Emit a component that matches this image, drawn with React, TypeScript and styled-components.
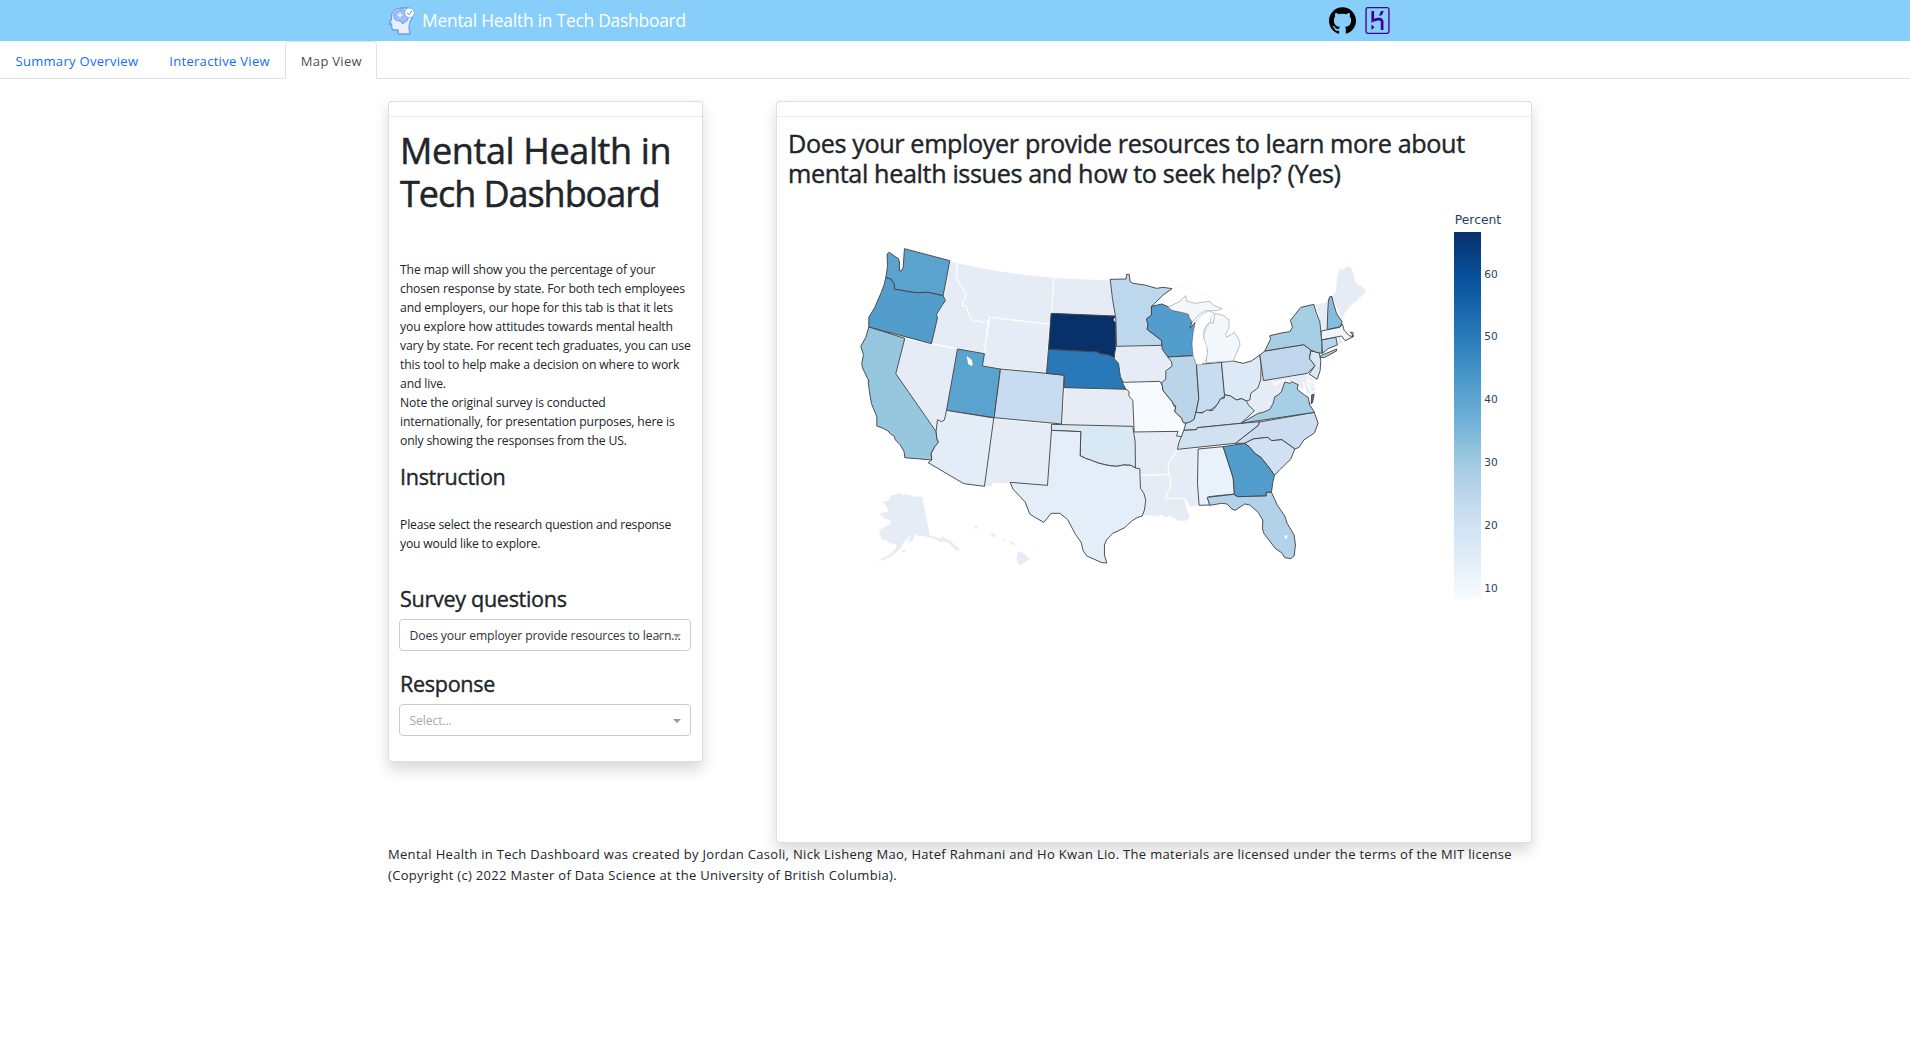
import React from 'react';
import styled, { createGlobalStyle } from 'styled-components';
import { SiGithub, SiHeroku } from 'react-icons/si';

const GlobalStyle = createGlobalStyle`
  *, *::before, *::after { box-sizing: border-box; }
  body {
    margin: 0;
    background: #fff;
    color: #212529;
    font-family: 'Segoe UI', 'Open Sans', 'Noto Sans', sans-serif;
    font-size: 14.4px;
    line-height: 1.5;
  }
  h1, h3, h4, p { margin: 0; }
`;

const Navbar = styled.header`
  height: 41px;
  background: #87cefa;
  display: flex;
  align-items: center;
  padding: 0 519px 0 388px;
`;
const Brand = styled.div`
  display: flex;
  align-items: center;
  gap: 7px;
  flex: 1;
  color: #fff;
  font-size: 17.4px;
  letter-spacing: -0.23px;
  white-space: nowrap;
`;
const NavIcons = styled.div`
  display: flex;
  align-items: center;
  gap: 8px;
`;
const Tabs = styled.nav`
  display: flex;
  height: 38px;
  border-bottom: 1px solid #dee2e6;
`;
const Tab = styled.a<{ $active?: boolean }>`
  height: 38px;
  padding: 9px 14.5px 0;
  line-height: 21px;
  font-size: 13px;
  letter-spacing: 0.3px;
  color: ${(p) => (p.$active ? '#495057' : '#0d6efd')};
  border: 1px solid ${(p) => (p.$active ? '#dee2e6' : 'transparent')};
  border-bottom-color: ${(p) => (p.$active ? '#fff' : 'transparent')};
  border-radius: 4px 4px 0 0;
  white-space: nowrap;
`;
const Page = styled.main`
  padding: 22px 378px 0 388px;
`;
const Columns = styled.div`
  display: flex;
  align-items: flex-start;
  justify-content: space-between;
`;
const Card = styled.section<{ $width: number; $height: number }>`
  width: ${(p) => p.$width}px;
  height: ${(p) => p.$height}px;
  background: #fff;
  border: 1px solid rgba(0, 0, 0, 0.125);
  border-radius: 4px;
  box-shadow: 0 7.2px 14.4px rgba(0, 0, 0, 0.15);
`;
const CardHeader = styled.div`
  height: 15px;
  border-bottom: 1px solid rgba(0, 0, 0, 0.07);
`;
const CardBody = styled.div`
  display: flex;
  flex-direction: column;
  padding: 11px 11px 0;
  white-space: nowrap;
`;
const PageTitle = styled.h1`
  margin-top: 1px;
  font-size: 36px;
  font-weight: 500;
  line-height: 43.2px;
  -webkit-text-stroke: 0.5px #212529;
`;
const TitleLine = styled.span<{ $spacing: number }>`
  display: block;
  letter-spacing: ${(p) => p.$spacing}px;
`;
const Copy = styled.p<{ $top: number; $spacing: number }>`
  margin-top: ${(p) => p.$top}px;
  font-size: 12.2px;
  line-height: 18.9px;
  letter-spacing: ${(p) => p.$spacing}px;
`;
const Heading = styled.h4<{ $top: number }>`
  margin-top: ${(p) => p.$top}px;
  font-size: 21.6px;
  font-weight: 500;
  line-height: 25.9px;
  letter-spacing: -0.32px;
  -webkit-text-stroke: 0.35px #212529;
`;
const Select = styled.div<{ $empty?: boolean }>`
  position: relative;
  margin: 7px 0 0 -1px;
  height: 32.4px;
  width: 292px;
  padding: 0 9.5px;
  border: 1px solid #ccc;
  border-radius: 4px;
  font-size: 12.2px;
  line-height: 31px;
  letter-spacing: -0.13px;
  color: ${(p) => (p.$empty ? '#aaa' : '#333')};
`;
const Arrow = styled.span`
  position: absolute;
  right: 9px;
  top: 14px;
  border: 4.5px solid transparent;
  border-top-color: #999;
  border-bottom-width: 0;
`;
const Clear = styled.svg`
  position: absolute;
  right: 27px;
  top: 12.5px;
  width: 7px;
  height: 7px;
`;
const Question = styled.h3`
  font-size: 25.2px;
  font-weight: 500;
  line-height: 30.24px;
  letter-spacing: -0.38px;
  margin-bottom: 8px;
  -webkit-text-stroke: 0.4px #212529;
`;
const Chart = styled.svg`
  display: block;
  width: 730px;
  height: 410px;
`;
const AxisText = styled.text`
  font-family: Verdana, 'DejaVu Sans', sans-serif;
  fill: #2a3f5f;
`;
const Footer = styled.footer`
  padding-top: 0.5px;
  font-size: 13px;
  line-height: 21.4px;
  letter-spacing: 0.307px;
  white-space: nowrap;
`;

const Logo = () => (
  <svg width="27" height="28" viewBox="0 0 27 28">
    <path d="M3.5 11C3 4 8 1 14 1h6c4 1 6 5 4 10-2 3-3 6-3 9l1 7H10.500l-.5-4H6c-3 0-2-3-2.500-6H1.200l2.300-5z" fill="#e9effd" stroke="#669df6" strokeWidth="1.3" />
    <path d="M6 10c-1-3 1-6 4-6 2-2 5-2 7 0 4 0 5 4 3 7 0 3-2 4-4 4l-1 2-3-3c-3 0-6-1-6-4z" fill="#9fbdf7" stroke="#669df6" />
    <path d="M12 5.500v5M9.500 8h5" stroke="#f4f8ff" strokeWidth="1.300" fill="none" />
    <circle cx="21.500" cy="5.800" r="4.800" fill="#fff" stroke="#8ab4f8" />
    <path d="m19.300 6 1.600 1.700 3-3.800" fill="none" stroke="#4b7be0" />
  </svg>
);

type Frame = 'a' | 'b' | 'c' | 'd';
const frames: Record<Frame, string> = {
  a: 'translate(850 230) scale(.33333)',
  b: 'translate(1030 250) scale(.33333)',
  c: 'translate(1190 250) scale(.33333)',
  d: 'translate(850 470) scale(.33333)',
};

const NO_DATA = '#e5ecf6';
const withoutData: [string, Frame, string][] = [
  ['ID', 'a', 'M300 92 323 98 320 130 322 150 333 168 349 190 346 205 340 212 337 228 348 226 356 246 362 264 370 275 390 272 397 277 415 272 404 371 322 357 245 340 262 262 260 250 287 212 280 197z'],
  ['MT', 'a', 'M323 98Q460 130 612 142L604 283 420 262 415 272 397 277 390 272 370 275 362 264 356 246 348 226 337 228 340 212 346 205 349 190 333 168 322 150 320 130z'],
  ['WY', 'a', 'M420 262 599 283 589 431 398 408z'],
  ['ND', 'a', 'M612 142Q700 148 780 149L784 185 790 210 795 257 605 250z'],
  ['NV', 'a', 'M165 325 322 357 290 541 284 570 275 575 263 569 259 604 138 431z'],
  ['NM', 'a', 'M432 565 607 582 593 766 481 757 483 762 429 759 427 771 404 769z'],
  ['KS', 'b', 'M104 415 288 419 298 425 295 438 309 451 310 530 95 523z'],
  ['IA', 'b', 'M257 290 395 286 397 298 414 318 427 340 408 362 408 388 395 398 390 394 277 397 271 360 258 325 255 318z'],
  ['AR', 'b', 'M313 546 443 544 439 558 455 560 447 578 443 598 430 620 417 640 415 655 418 674 332 676 330 656 317 654z'],
  ['LA', 'b', 'M332 676 418 674 424 690 420 700 424 712 415 725 407 745 465 745 470 770 483 808 477 804 476 812 460 814 445 814 430 803 415 800 405 805 397 796 375 802 355 796 335 798 344 780 348 750 332 715z'],
  ['MS', 'b', 'M443 598 505 595 503 700 508 766 480 772 465 745 407 745 415 725 424 712 420 700 424 690 418 674 415 655 417 640 430 620z'],
  ['WV', 'c', 'M217 365 221 392 250 388 254 405 270 395 285 392 280 405 283 405 275 425 265 435 255 440 250 460 240 478 220 487 205 490 192 485 175 465 172 452 180 450 183 430 205 413 212 395z'],
  ['MD', 'c', 'M250 388 352 370 362 402 380 402 378 418 368 428 350 434 345 420 325 410 318 395 300 395 285 392 270 395 254 405z'],
  ['DE', 'c', 'M352 370 358 372 376 397 377 412 364 408z'],
  ['VT', 'c', 'M375 163 416 154 413 178 412 240 394 242 390 215z'],
  ['ME', 'c', 'M425 140 436 125 442 75 450 54 460 58 475 47 487 54 500 100 515 106 531 125 515 140 500 155 485 165 465 190 458 215z'],
  ['RI', 'c', 'M440 262 450 258 460 276 455 280 446 286z'],
  ['AK', 'd', 'M218 81 240 198 256 200 271 207 278 198 290 208 302 212 315 226 328 234 330 243 318 241 300 222 288 214 270 216 252 206 235 201 215 197 200 200 205 192 194 196 192 208 178 220 176 209 185 196 175 203 158 222 154 234 140 246 120 262 102 270 84 273 104 262 122 252 137 237 140 222 118 220 110 210 98 209 88 190 92 178 112 167 122 163 122 149 105 147 88 132 106 125 118 127 112 113 101 95 116 91 125 75 138 74 149 67 156 74 180 74 188 79zM155 245 164 238 170 242 162 249zM61 151 68 154 73 159z'],
  ['HI', 'd', 'M372 172 380 168 384 173 378 178zM423 192 430 188 440 197 434 201 426 199zM476 215 484 213 496 222 493 226 484 222zM458 207 468 207 470 210 460 209zM504 242 524 252 540 267 508 287 500 267z'],
];

const withData: [string, Frame, string, string][] = [
  ['WA', 'a', '#5ba3cf', 'M164 56 300 92 280 197 235 187 200 188 183 186 165 183 150 180 140 179 134 178 133 161 123 147 108 143 113 110 112 72 118 67 134 78 146 86 149 96 149 122 154 123 160 113z'],
  ['OR', 'a', '#539dcc', 'M108 143 123 147 133 161 134 178 150 180 165 183 183 186 200 188 235 187 280 197 287 212 277 226 260 253 263 264 245 341 57 291 57 262 75 232 94 188 103 164z'],
  ['CA', 'a', '#97c6df', 'M57 291 165 325 138 431 259 605 261 625 266 637 255 650 244 671 246 690 165 683 163 665 151 644 136 629 134 619 122 612 115 603 98 594 81 588 81 560 65 521 59 485 55 455 58 455 38 413 36 400 41 374 33 349 48 322z'],
  ['UT', 'a', '#5ba3cf', 'M323 357 404 371 398 408 452 417 433 563 290 541z'],
  ['CO', 'a', '#c7dcf0', 'M452 417 643 435 635 582 433 563z'],
  ['AZ', 'a', '#e3edf8', 'M290 541 432 564 404 769 342 761 235 698 246 690 244 671 255 650 266 637 261 625 259 604 263 569 275 575 284 570z'],
  ['OK', 'b', '#d9e8f5', 'M65 523 309 529 316 575 317 654 303 646 281 645 260 649 240 647 225 644 205 639 185 631 167 625 151 617 153 545 65 541z'],
  ['TX', 'b', '#e3eef9', 'M65 541 153 545 151 617 167 625 185 631 205 639 225 644 240 647 260 649 281 645 303 646 317 654 330 656 332 715 342 730 348 750 344 780 337 798 322 803 307 812 283 834 249 850 230 870 224 885 224 915 231 939 216 938 171 918 160 902 154 877 137 853 113 808 90 790 64 790 42 817 17 803 0 792 -14 756 -50 718 -59 697 53 706z'],
  ['SD', 'b', '#08306b', 'M64 190 257 198 250 210 258 219 258 290 254 315 255 323 235 314 209 311 204 306 56 298z'],
  ['NE', 'b', '#2979b9', 'M56 298 204 306 209 311 235 314 251 323 266 340 272 380 290 418 103 413 104 376 50 370z'],
  ['MN', 'b', '#bdd7ec', 'M241 88 289 87 290 73 298 73 301 95 310 100 345 105 380 115 400 112 427 116 400 135 375 160 365 169 365 195 350 207 355 222 352 238 370 252 395 271 396 286 260 289 258 205 248 146z'],
  ['WI', 'b', '#539dcc', 'M365 169 396 162 415 170 427 181 462 188 476 193 480 205 487 215 480 235 497 216 490 250 487 282 491 317 414 321 397 298 395 271 370 252 352 238 355 222 350 207 365 195z'],
  ['MO', 'b', '#f7fbff', 'M277 397 390 394 397 405 400 422 428 456 433 470 438 468 435 485 456 505 461 517 468 520 468 540 455 560 440 558 445 544 313 546 309 451 297 438 298 425 288 417z'],
  ['IL', 'b', '#bad5ea', 'M414 321 491 317 500 344 507 446 498 490 493 508 475 520 460 518 456 505 435 485 438 468 430 462 428 456 400 422 397 405 395 398 408 388 408 362 427 348 425 335z'],
  ['IN', 'b', '#c7dcf0', 'M500 344 520 342 575 337 585 438 572 447 563 463 547 477 530 485 498 490 507 446z'],
  ['OH', 'c', '#dce9f6', 'M95 337 130 333 160 340 185 333 210 315 214 345 213 388 205 413 183 430 180 450 170 453 155 446 140 450 122 438 104 434z'],
  ['MI', 'c', '#f3f8fd', 'M50 338 50 325 53 300 43 278 42 253 52 227 62 218 70 220 76 190 100 196 118 210 117 235 107 253 110 261 124 254 133 247 145 264 151 283 140 310 130 333z'],
  ['MI-upper', 'b', '#f3f8fd', 'M415 172 448 155 468 137 470 153 495 160 540 154 550 165 577 176 560 182 528 182 510 192 496 207 487 215 480 205 476 193 462 188 427 181z'],
  ['KY', 'c', '#d0e1f2', 'M104 434 122 438 140 450 155 446 170 453 176 465 194 483 153 520 23 533 20 539 -18 541 -12 520 5 514 13 508 18 487 38 489 50 480 68 482 83 463 92 447 104 444z'],
  ['TN', 'c', '#d0e1f2', 'M209 515 205 527 160 562 137 580 -37 598 -33 578 -25 560 -18 541 20 539 23 533 153 520z'],
  ['NC', 'c', '#ccddf1', 'M209 516 373 487 385 519 374 549 342 570 328 592 315 597 276 569 246 572 233 562 190 567 165 580 137 580 160 562 205 527z'],
  ['SC', 'c', '#d0e1f2', 'M165 580 190 567 233 562 246 572 276 569 315 597 303 627 270 659 254 676 238 653 213 622 195 610 180 592z'],
  ['AL', 'b', '#e9f1fb', 'M505 597 580 590 610 683 614 732 537 740 535 748 540 765 508 766 503 700z'],
  ['GA', 'c', '#539dcc', 'M100 590 165 580 180 592 195 610 213 622 238 653 254 676 249 697 245 727 230 727 229 738 143 740 134 733 130 683z'],
  ['FL', 'c', '#b1d2e8', 'M52 742 132 733 143 740 229 738 230 727 245 727 263 766 285 798 292 820 313 855 317 885 313 918 303 926 285 923 275 908 257 896 222 850 218 837 219 810 205 787 180 765 165 762 136 781 126 777 112 762 95 760 60 766z'],
  ['VA', 'c', '#a6cee4', 'M153 520 205 490 220 487 240 478 250 460 255 440 265 435 275 425 285 396 300 400 306 395 325 404 322 418 344 435 355 442 360 465 374 487z'],
  ['VA-east', 'c', '#4d7896', 'M366 434 374 428 368 458 364 462z'],
  ['PA', 'c', '#bfd6ed', 'M210 315 225 303 342 284 363 300 359 326 376 347 353 370 221 392z'],
  ['NJ', 'c', '#dae8f5', 'M363 303 388 308 393 332 391 362 382 388 358 372 376 347 359 326z'],
  ['NY', 'c', '#a6cee4', 'M225 303 242 268 240 257 280 248 300 245 308 232 302 211 333 172 372 163 380 190 390 215 397 278 396 310 380 307 363 300 342 284zM392 317 441 297 440 303 405 322 392 323z'],
  ['NH', 'c', '#85bbdb', 'M416 150 420 140 426 139 430 155 440 190 457 215 452 230 412 239 414 180z'],
  ['MA', 'c', '#f0f5fc', 'M394 243 450 232 458 222 463 241 478 257 489 260 486 250 481 247 489 247 491 260 466 272 455 258 445 260 395 270z'],
  ['CT', 'c', '#b8d5ea', 'M396 270 438 262 443 285 415 296 398 310z'],
];

const blues = ['#08306b', '#08519c', '#2171b5', '#4292c6', '#6baed6', '#9ecae1', '#c6dbef', '#deebf7', '#f7fbff'];
const ticks = [60, 50, 40, 30, 20, 10];

const StateMap = () => (
  <Chart viewBox="788.2 196 730 410">
    <defs>
      <linearGradient id="blues" x1="0" y1="0" x2="0" y2="1">
        {blues.map((c, i) => (
          <stop key={c} offset={i / 8} stopColor={c} />
        ))}
      </linearGradient>
    </defs>
    {withoutData.map(([id, frame, d]) => (
      <path key={id} d={d} transform={frames[frame]} fill={NO_DATA} stroke={frame === 'd' ? 'none' : '#fff'} strokeWidth="3" strokeLinejoin="round" />
    ))}
    {withData.map(([id, frame, fill, d]) => (
      <path key={id} d={d} transform={frames[frame]} fill={fill} stroke={id.startsWith('MI') ? '#888' : '#444'} strokeWidth={id.startsWith('MI') ? 1.6 : 2.8} strokeLinejoin="round" />
    ))}
    {/* lakes and the Chesapeake Bay */}
    <g fill="#fff">
      <path transform={frames.a} d="m350 378 8 5 8 7 3 15-5 2-9-5-2-11z" />
      <path transform={frames.c} d="m284 857 7-2 2 9-7 3z" />
      <path transform={frames.b} stroke="#888" strokeWidth="1.2" d="M497 216 515 195 535 184 553 188 543 202 543 215 532 222 522 240 521 262 531 290 533 310 528 330 515 344 500 344 490 317 487 282 490 250z" />
    </g>
    <path transform={frames.c} d="m250 394 4 10 16-9 15-4M340 395 350 433M350 388 362 425 378 432M358 390 376 403" stroke="#fff" strokeWidth="5" fill="none" />
    <path transform={frames.b} d="M427 116 457 107 520 132 570 154 578 165 615 188" stroke="#eee" strokeWidth="1.5" fill="none" />
    <AxisText x="1455" y="224" fontSize="12.3">Percent</AxisText>
    <rect x="1454.2" y="232" width="27" height="366.500" fill="url(#blues)" />
    {ticks.map((t, i) => (
      <AxisText key={t} x="1484.500" y={277.5 + i * 62.8} fontSize="10.6">{t}</AxisText>
    ))}
  </Chart>
);

export default function App() {
  return (
    <>
      <GlobalStyle />
      <Navbar>
        <Brand><Logo />Mental Health in Tech Dashboard</Brand>
        <NavIcons>
          <SiGithub size={27} color="#000" />
          <SiHeroku size={27} color="#430098" />
        </NavIcons>
      </Navbar>
      <Tabs>
        <Tab>Summary Overview</Tab>
        <Tab>Interactive View</Tab>
        <Tab $active>Map View</Tab>
      </Tabs>
      <Page>
        <Columns>
          <Card $width={315} $height={661}>
            <CardHeader />
            <CardBody>
              <PageTitle>
                <TitleLine $spacing={-0.38}>Mental Health in</TitleLine>
                <TitleLine $spacing={-1.05}>Tech Dashboard</TitleLine>
              </PageTitle>
              <Copy $top={46} $spacing={-0.14}>
                The map will show you the percentage of your<br />
                chosen response by state. For both tech employees<br />
                and employers, our hope for this tab is that it lets<br />
                you explore how attitudes towards mental health<br />
                vary by state. For recent tech graduates, you can use<br />
                this tool to help make a decision on where to work<br />
                and live.<br />
                Note the original survey is conducted<br />
                internationally, for presentation purposes, here is<br />
                only showing the responses from the US.
              </Copy>
              <Heading $top={13.500}>Instruction</Heading>
              <Copy $top={26} $spacing={-0.2}>
                Please select the research question and response<br />
                you would like to explore.
              </Copy>
              <Heading $top={32.500}>Survey questions</Heading>
              <Select>
                Does your employer provide resources to learn...
                <Clear viewBox="0 0 7 7"><path d="M1 1l5 5M6 1L1 6" stroke="#999" strokeWidth="1.3" /></Clear>
                <Arrow />
              </Select>
              <Heading $top={19.500}>Response</Heading>
              <Select $empty>Select...<Arrow /></Select>
            </CardBody>
          </Card>
          <Card $width={756} $height={742}>
            <CardHeader />
            <CardBody>
              <Question>
                Does your employer provide resources to learn more about<br />
                mental health issues and how to seek help? (Yes)
              </Question>
              <StateMap />
            </CardBody>
          </Card>
        </Columns>
        <Footer>
          Mental Health in Tech Dashboard was created by Jordan Casoli, Nick Lisheng Mao, Hatef Rahmani and Ho Kwan Lio. The materials are licensed under the terms of the MIT license<br />
          (Copyright (c) 2022 Master of Data Science at the University of British Columbia).
        </Footer>
      </Page>
    </>
  );
}
